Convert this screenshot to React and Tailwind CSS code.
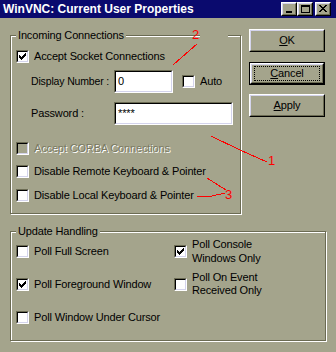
import React from 'react';

// Win95-style "WinVNC: Current User Properties" dialog

function CheckMark() {
  const px = [
    [6, 0], [5, 1], [6, 1], [0, 2], [4, 2], [5, 2], [6, 2],
    [0, 3], [1, 3], [3, 3], [4, 3], [5, 3],
    [0, 4], [1, 4], [2, 4], [3, 4], [4, 4],
    [1, 5], [2, 5], [3, 5], [2, 6],
  ];
  return (
    <svg width="7" height="7" viewBox="0 0 7 7" shapeRendering="crispEdges" className="absolute left-[1px] top-[1px]">
      {px.map(([x, y]) => (
        <rect key={`${x}-${y}`} x={x} y={y} width="1" height="1" fill="#000" />
      ))}
    </svg>
  );
}

function Check({ checked, disabled, className = '' }) {
  return (
    <div className={`w-[13px] h-[13px] shrink-0 border border-t-[#6b6b53] border-l-[#6b6b53] border-b-white border-r-white ${className}`}>
      <div className={`relative w-full h-full border border-t-black border-l-black border-b-[#d4d4ec] border-r-[#d4d4ec] ${disabled ? 'bg-[#a4a48c]' : 'bg-white'}`}>
        {checked && <CheckMark />}
      </div>
    </div>
  );
}

function CheckRow({ checked, disabled, children, className = '' }) {
  return (
    <div className={`flex items-center ${className}`}>
      <Check checked={checked} disabled={disabled} />
      <span className={`ml-[5px] whitespace-nowrap ${disabled ? 'text-[#7a7a62] [text-shadow:1px_1px_0_#fff]' : ''}`}>
        {children}
      </span>
    </div>
  );
}

function Field({ children, className = '' }) {
  return (
    <div className={`h-[23px] border border-t-[#6b6b53] border-l-[#6b6b53] border-b-white border-r-white ${className}`}>
      <div className="w-full h-full bg-white border border-t-black border-l-black border-b-[#d4d4ec] border-r-[#d4d4ec] flex items-center pl-[2px]">
        {children}
      </div>
    </div>
  );
}

function Button({ children, isDefault, className = '' }) {
  const bevel = (
    <div className="w-full h-full border border-t-white border-l-white border-b-black border-r-black">
      <div className="w-full h-full border border-t-[#d4d4ec] border-l-[#d4d4ec] border-b-[#6b6b53] border-r-[#6b6b53] flex items-center justify-center">
        {isDefault ? (
          <div className="border border-dotted border-black w-[66px] h-[15px] flex items-center justify-center">{children}</div>
        ) : (
          children
        )}
      </div>
    </div>
  );
  return (
    <div className={`w-[76px] h-[23px] ${isDefault ? 'border border-black' : ''} ${className}`}>
      {bevel}
    </div>
  );
}

function CapButton({ children }) {
  return (
    <div className="w-[16px] h-[14px] bg-[#a4a48c] border border-t-white border-l-white border-b-black border-r-black">
      <div className="relative w-full h-full border border-t-[#d4d4ec] border-l-[#d4d4ec] border-b-[#6b6b53] border-r-[#6b6b53]">
        {children}
      </div>
    </div>
  );
}

function Group({ label, className = '', children }) {
  return (
    <div className={`relative border border-[#6b6b53] shadow-[inset_1px_1px_0_#fff,1px_1px_0_#fff] ${className}`}>
      <span className="absolute left-[5px] -top-[7px] px-[2px] bg-[#a4a48c] whitespace-nowrap">{label}</span>
      {children}
    </div>
  );
}

function Annotations() {
  return (
    <svg width="336" height="352" className="absolute left-0 top-0 pointer-events-none" shapeRendering="crispEdges">
      <g stroke="#ff0000" strokeWidth="1" fill="none">
        <line x1="197" y1="44" x2="173" y2="65" />
        <polyline points="211,136 240,150 267,162" />
        <line x1="207" y1="178" x2="226" y2="190" />
        <polyline points="197,197 212,196 225,193" />
      </g>
      <g fill="#ff0000" fontFamily="Liberation Sans, Arial, sans-serif" fontSize="13">
        <text x="192" y="39">2</text>
        <text x="268" y="165">1</text>
        <text x="225" y="199">3</text>
      </g>
    </svg>
  );
}

export default function App() {
  return (
    <div className="relative w-[336px] h-[352px] overflow-hidden bg-[#a4a48c] text-black text-[11px] leading-[13px] tracking-[-0.15px] font-['Liberation_Sans',Arial,sans-serif]">
      {/* Title bar */}
      <div className="h-[18px] bg-[#0a0a6e] flex items-center pl-[3px] pr-[5px]">
        <span className="flex-1 text-white font-bold text-[12px] tracking-normal whitespace-nowrap">WinVNC: Current User Properties</span>
        <div className="flex items-center">
          <CapButton>
            <div className="absolute left-[3px] top-[7px] w-[6px] h-[2px] bg-black" />
          </CapButton>
          <CapButton>
            <div className="absolute left-[2px] top-[1px] w-[9px] h-[8px] border border-black border-t-2" />
          </CapButton>
          <div className="w-[2px]" />
          <CapButton>
            <svg width="8" height="7" viewBox="0 0 8 7" shapeRendering="crispEdges" className="absolute left-[2px] top-[1px]">
              <path d="M0 0h2v1h-2zM6 0h2v1h-2zM1 1h2v1h-2zM5 1h2v1h-2zM2 2h4v1h-4zM3 3h2v1h-2zM2 4h4v1h-4zM1 5h2v1h-2zM5 5h2v1h-2zM0 6h2v1h-2zM6 6h2v1h-2z" fill="#000" />
            </svg>
          </CapButton>
        </div>
      </div>

      {/* Top row: incoming connections + buttons */}
      <div className="flex items-start pl-[10px]">
        <Group label="Incoming Connections" className="mt-[17px] w-[231px] h-[179px]">
          {/* gap in the frame line next to the "2" note */}
          <div className="absolute left-[189px] -top-[2px] w-[28px] h-[3px] bg-[#a4a48c]" />
          <div className="flex flex-col pl-[5px]">
            <CheckRow checked className="mt-[14px]">Accept Socket Connections</CheckRow>
            <div className="mt-[7px] flex items-center h-[23px]">
              <span className="ml-[15px] w-[83px] shrink-0 whitespace-nowrap text-[10.5px]">Display Number :</span>
              <Field className="w-[59px]">0</Field>
              <Check className="ml-[9px]" />
              <span className="ml-[5px]">Auto</span>
            </div>
            <div className="mt-[9px] flex items-center h-[23px]">
              <span className="ml-[15px] w-[83px] shrink-0">Password :</span>
              <Field className="w-[119px]">****</Field>
            </div>
            <CheckRow disabled className="mt-[17px]">Accept CORBA Connections</CheckRow>
            <CheckRow className="mt-[10px]">Disable Remote Keyboard &amp; Pointer</CheckRow>
            <CheckRow className="mt-[11px]">Disable Local Keyboard &amp; Pointer</CheckRow>
          </div>
        </Group>

        <div className="ml-[8px] mt-[11px] flex flex-col">
          <Button><span><span className="underline">O</span>K</span></Button>
          <Button isDefault className="mt-[10px]"><span><span className="underline">C</span>ancel</span></Button>
          <Button className="mt-[9px]"><span><span className="underline">A</span>pply</span></Button>
        </div>
      </div>

      {/* Update handling */}
      <Group label="Update Handling" className="ml-[10px] mt-[17px] w-[316px] h-[110px]">
        <div className="grid grid-cols-[158px_1fr] auto-rows-[28px] gap-y-[5px] pl-[5px] pt-[5px]">
          <CheckRow>Poll Full Screen</CheckRow>
          <CheckRow checked>
            <span className="block leading-[14px]">Poll Console<br />Windows Only</span>
          </CheckRow>
          <CheckRow checked>Poll Foreground Window</CheckRow>
          <CheckRow>
            <span className="block leading-[13px]">Poll On Event<br />Received Only</span>
          </CheckRow>
          <CheckRow>Poll Window Under Cursor</CheckRow>
        </div>
      </Group>

      <Annotations />
    </div>
  );
}
